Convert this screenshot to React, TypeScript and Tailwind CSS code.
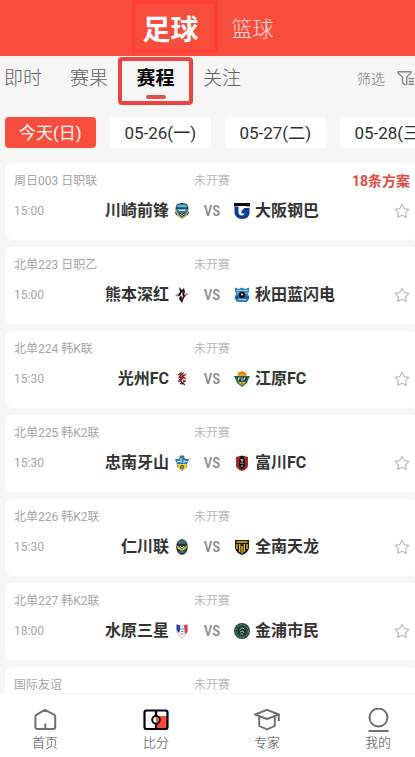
import type { ReactNode } from 'react';
import clsx from 'clsx';

interface Match {
  id: string;
  league: string;
  time: string;
  home: string;
  away: string;
  homeCrest: ReactNode;
  awayCrest: ReactNode;
  plans?: string;
}

const sports = ['足球', '篮球'];
const tabs = ['即时', '赛果', '赛程', '关注'];
const dates = ['今天(日)', '05-26(一)', '05-27(二)', '05-28(三)'];

function Crest({ children }: { children: ReactNode }) {
  return (
    <svg viewBox="0 0 16 16" className="h-4 w-4 shrink-0" aria-hidden="true">
      {children}
    </svg>
  );
}

const crests = {
  kawasaki: (
    <Crest>
      <path d="M1 5 L3 1 H13 L15 5 L14 12 L8 16 L2 12Z" fill="#b79a6c" />
      <path d="M3 1 L8 0 L13 1 L14 6 H2Z" fill="#17171d" />
      <path d="M3.5 1.5 H12.5 L13 4.5 H3Z" fill="#45b9ea" />
      <path d="M2 5.5 H14 L12.5 10 H3.5Z" fill="#2a7fa8" />
      <path d="M4 6.5 H12 L11 8 H5Z" fill="#c9e6f0" />
      <path d="M4.5 9 L8 11 L11.5 9 L11 12 L8 14 L5 12Z" fill="#2c2d38" />
      <path d="M5.5 11 L8 12.5 L10.5 11" stroke="#e3cc9c" fill="none" />
      <path d="M1 9 L3 12 M15 9 L13 12" stroke="#52402f" />
    </Crest>
  ),
  osaka: (
    <Crest>
      <path d="M0 0 H16 V3.5 H12.5 V3 H3.5 V3.5 H0Z" fill="#08090f" />
      <path d="M0.5 4 H4.5 V10 Q5 12.5 8 12.5 Q10.2 12.3 10.8 10.5 H7.5 V8 L10.5 5 H15.5 V11 Q14 16 8 16 Q1.5 15.5 0.5 10Z" fill="#0b3b92" />
    </Crest>
  ),
  kumamoto: (
    <Crest>
      <path d="M5 0 L8 3 L10 1 L11 5 L10 8 L13 7 L10 11 L8 16 L5 12 L6 9 L3 9 L6 5Z" fill="#171216" />
      <path d="M1 8 L5 6 L4 10Z M12 6 L15 7 L11 9Z" fill="#a38b8d" />
      <path d="M7 6 L10 4 L8 8Z M7 11 L10 9 L8 13Z" fill="#d7303f" />
      <path d="M8 5.5 L6 9 L9 10Z" fill="#fff" />
    </Crest>
  ),
  akita: (
    <Crest>
      <path d="M1 0.5 L5 2 L8 0.5 L11 2 L15 0.5 V4 L14 7 L15.5 11 L13 15 H3 L0.5 11 L2 7 L1 4Z" fill="#2f7fb8" />
      <path d="M2 3.5 H14 M2 6 H14 M3 12.5 H13" stroke="#9ed0ea" />
      <circle cx="8" cy="8" r="3.3" fill="#10151f" />
      <circle cx="8" cy="7.5" r="1" fill="#e8f2f7" />
      <path d="M1 10 L4 10 L3 13 M15 10 L12 10 L13 13" stroke="#14406e" fill="none" />
    </Crest>
  ),
  gwangju: (
    <Crest>
      <path d="M4 4 L7 2 L6 5 L9 2.5 L8.5 6 L12 3 M4 7 L7 6 L6.5 9 L10 6.5 L12 8 M4 10 L7 10 L8 12 L11 10 M6 13 L8 11.5 L11 14" stroke="#8d1d2c" strokeWidth="1.3" fill="none" />
      <path d="M5 8.5 L8 8 M9 9 L12 10.5 M8 13.5 L10 12" stroke="#3a1c20" />
    </Crest>
  ),
  gangwon: (
    <Crest>
      <path d="M8 0 L12 1.5 L13 5 H3 L4 1.5Z" fill="#f1a024" />
      <path d="M5 3 L8 1.5 L11 3" stroke="#c95a1f" fill="none" />
      <path d="M0 5 H16 L14 9 L13 12 L8 16 L3 12 L2 9Z" fill="#1d6a48" />
      <path d="M3 6 H13 L12 10 H4Z" fill="#24303b" />
      <path d="M4.5 9.5 V7 H6.5 M8 6.5 V10 M10 9.5 V7 H11.5" stroke="#eef3e4" fill="none" />
      <path d="M4 11 H12 L8 15Z" fill="#e2b32b" />
      <path d="M8 11 V15" stroke="#2b8254" />
    </Crest>
  ),
  chungnam: (
    <Crest>
      <path d="M6 0.5 H10 L11 4 H15 L13 9 V12 L8 16 L3 12 V9 L1 4 H5Z" fill="#2b75b3" />
      <path d="M3 9 H13 L12 13 L8 16 L4 13Z" fill="#f0ce32" />
      <path d="M3 6.5 H6 M7 3 V8 M10 5 V8 M11 6.5 H13" stroke="#fff" />
      <circle cx="8" cy="12" r="2" fill="#32566a" />
      <path d="M7 12 H9" stroke="#f0ce32" />
    </Crest>
  ),
  bucheon: (
    <Crest>
      <path d="M2 2 L8 0.5 L14 2 V11 Q13 14.5 8 16 Q3 14.5 2 11Z" fill="#a3262b" />
      <path d="M6 1 H10 V4 H11 V12 L8 14.5 L5 12 V4 H6Z" fill="#15100f" />
      <path d="M6.5 5 L9.5 5 M8 4 V7 M6.5 9 L8 7.5 L9.5 9 M7 11 H9" stroke="#efd7ca" strokeWidth="0.9" fill="none" />
    </Crest>
  ),
  incheon: (
    <Crest>
      <ellipse cx="8" cy="8" rx="5.8" ry="7.8" fill="#22303a" />
      <path d="M4 4 H12 M5 2.2 H11" stroke="#68a8a8" strokeWidth="0.9" />
      <path d="M2.5 6.5 L6 8 L8 10 L10 8 L13.5 6.5 L12 10 L8 12 L4 10Z" fill="#b9c33c" />
      <path d="M6 7 L8 9 L10 7" stroke="#eff3df" fill="none" />
      <path d="M5 13 H11" stroke="#6ca59e" />
    </Crest>
  ),
  jeonnam: (
    <Crest>
      <path d="M1 1 H15 V9 Q14 14 8 16 Q2 14 1 9Z" fill="#191511" />
      <path d="M3 5 V10 M5.7 5 V13 M8 7 V14.5 M10.3 5 V13 M13 5 V10" stroke="#e8bd22" strokeWidth="1.4" />
      <path d="M2.5 3 H13.5" stroke="#e8bd22" strokeWidth="1.5" />
    </Crest>
  ),
  suwon: (
    <Crest>
      <path d="M3 1.5 L8 3 L13 1.5 V10 L8 15.5 L3 10Z" fill="#eef1f7" stroke="#a9b7d4" strokeWidth="0.7" />
      <path d="M2.5 1.5 L6 2.5 V7 L5 10 L2.5 7Z" fill="#21489a" />
      <path d="M10 2.5 L13.5 1.5 V9 L11 11Z" fill="#df3745" />
      <path d="M6 6 H10 M7 8.5 H9.5 M7 11 L9 11" stroke="#7b93bd" />
    </Crest>
  ),
  gimpo: (
    <Crest>
      <circle cx="8" cy="8" r="8" fill="#1d4a3c" />
      <circle cx="8" cy="8" r="6.3" fill="none" stroke="#8aa06a" strokeWidth="0.9" strokeDasharray="2 1.4" />
      <circle cx="8" cy="8" r="4.4" fill="#17343c" />
      <path d="M5.5 7 L8 4.8 L10.5 6 M6 9 L9 8 L10 10 M6.5 11 H9" stroke="#b8c3a1" fill="none" />
    </Crest>
  ),
};

const matches: Match[] = [
  { id: '003', league: '周日003 日职联', time: '15:00', home: '川崎前锋', away: '大阪钢巴', homeCrest: crests.kawasaki, awayCrest: crests.osaka, plans: '18条方案' },
  { id: '223', league: '北单223 日职乙', time: '15:00', home: '熊本深红', away: '秋田蓝闪电', homeCrest: crests.kumamoto, awayCrest: crests.akita },
  { id: '224', league: '北单224 韩K联', time: '15:30', home: '光州FC', away: '江原FC', homeCrest: crests.gwangju, awayCrest: crests.gangwon },
  { id: '225', league: '北单225 韩K2联', time: '15:30', home: '忠南牙山', away: '富川FC', homeCrest: crests.chungnam, awayCrest: crests.bucheon },
  { id: '226', league: '北单226 韩K2联', time: '15:30', home: '仁川联', away: '全南天龙', homeCrest: crests.incheon, awayCrest: crests.jeonnam },
  { id: '227', league: '北单227 韩K2联', time: '18:00', home: '水原三星', away: '金浦市民', homeCrest: crests.suwon, awayCrest: crests.gimpo },
];

function MetaRow({ league, plans }: { league: string; plans?: string }) {
  return (
    <div className="grid h-4 grid-cols-[1fr_auto_1fr] items-center text-xs leading-4">
      <span className="text-[#a6a6a6]">{league}</span>
      <span className="text-[#b8b8b8]">未开赛</span>
      {plans && <span className="text-right text-sm leading-4 font-bold text-[#e5493c]">{plans}</span>}
    </div>
  );
}

function MatchCard({ match }: { match: Match }) {
  return (
    <li className="rounded-lg bg-white px-[9px] pt-2.5 pb-[17px]">
      <MetaRow league={match.league} plans={match.plans} />
      <div className="mt-2.5 grid h-6 grid-cols-[1fr_44px_1fr] items-center">
        <div className="flex items-center gap-[5px]">
          <time className="mr-auto text-xs text-[#a6a6a6]">{match.time}</time>
          <span className="text-base leading-6 font-bold text-[#333]">{match.home}</span>
          {match.homeCrest}
        </div>
        <span className="text-center font-['Roboto_Condensed','Liberation_Sans_Narrow',Roboto,sans-serif] text-[15px] leading-6 font-medium text-[#8c8c8c]">
          VS
        </span>
        <div className="flex items-center gap-[5px]">
          {match.awayCrest}
          <span className="text-base leading-6 font-bold text-[#333]">{match.away}</span>
          <button type="button" aria-label="收藏" className="ml-auto">
            <svg viewBox="0 0 16 16" className="h-4 w-4" fill="none" stroke="#bdbdbd" strokeWidth="1.2" strokeLinejoin="round">
              <path d="M8 1.3 L10.1 5.6 L14.9 6.3 L11.5 9.7 L12.3 14.4 L8 12.2 L3.7 14.4 L4.5 9.7 L1.1 6.3 L5.9 5.6Z" />
            </svg>
          </button>
        </div>
      </div>
    </li>
  );
}

const navItems = [
  {
    label: '首页',
    icon: (
      <path d="M13 1.8 L22 6.6 Q23.2 7.4 23.2 8.8 V19 Q23.2 21 21.2 21 H5.4 Q3.4 21 3.4 19 V8.8 Q3.4 7.4 4.6 6.6Z M13.3 15.5 V21" fill="none" stroke="#6f6f6f" strokeWidth="2" strokeLinejoin="round" />
    ),
  },
  {
    label: '比分',
    icon: (
      <>
        <rect x="1.5" y="2.5" width="23" height="18.5" rx="2" fill="#fff" />
        <path d="M13 8 H24 V20 H13Z" fill="#f54c3d" />
        <path d="M13 2.5 V8 M13 15.5 V21" stroke="#000" strokeWidth="2.2" />
        <rect x="1.5" y="2.5" width="23" height="18.5" rx="2" fill="none" stroke="#000" strokeWidth="2.2" />
        <circle cx="13" cy="11.8" r="3.8" fill="#fff" stroke="#000" strokeWidth="2" />
        <path d="M13 9 A2.8 2.8 0 0 1 13 14.6Z" fill="#f54c3d" />
      </>
    ),
  },
  {
    label: '专家',
    icon: (
      <g fill="none" stroke="#6f6f6f" strokeWidth="1.9" strokeLinejoin="round">
        <path d="M1 6.5 L13 1.8 L25 6.5 L13 11Z" />
        <path d="M5.2 8.5 V18 L13 21.3 L20.8 18 V8.5 M24.8 6.5 V13" />
      </g>
    ),
  },
  {
    label: '我的',
    icon: (
      <g fill="none" stroke="#6f6f6f" strokeWidth="2">
        <circle cx="13.5" cy="9.5" r="9" />
        <path d="M3.5 23 H23.5" />
      </g>
    ),
  },
];

export default function App() {
  return (
    <div className="flex h-screen flex-col overflow-hidden bg-[#f6f6f6] font-[Roboto,'Noto_Sans_CJK_SC',sans-serif]">
      <header className="flex h-14 shrink-0 items-start justify-center bg-[#f74d3d] pl-1">
        {sports.map((sport, i) => (
          <button
            key={sport}
            type="button"
            className={clsx(
              i === 0
                ? 'h-[53px] w-[86px] border-4 border-[#fc3f39] pt-2 pr-2 text-[28px] leading-9 font-bold text-white'
                : 'h-14 w-[70px] pt-0.5 text-[21px] leading-8 font-light text-white/80',
            )}
          >
            {sport}
          </button>
        ))}
      </header>

      {/* Sub tabs */}
      <div className="flex h-[49px] shrink-0 items-center pr-px">
        <nav className="-ml-2.5 flex">
          {tabs.map((tab) => (
            <button
              key={tab}
              type="button"
              className={clsx(
                'relative h-12 shrink-0 text-[19px] leading-7',
                tab === '赛程'
                  ? '-mx-1 w-[75px] rounded border-4 border-[#ec4343] pb-1 font-bold text-black'
                  : 'w-[66px] pb-1 font-light text-[#5f5f5f]',
              )}
            >
              {tab}
              {tab === '赛程' && (
                <span className="absolute bottom-0.5 left-1/2 h-1 w-5 -translate-x-1/2 rounded-full bg-[#df5145]" />
              )}
            </button>
          ))}
        </nav>
        <button type="button" className="ml-auto flex items-center gap-3 pb-1 text-sm font-light text-[#777]">
          筛选
          <svg viewBox="0 0 17 16" className="h-4 w-[17px]" fill="none" stroke="#858585" strokeWidth="1.4" strokeLinejoin="round">
            <path d="M8.5 14 L5.5 12 V6 L1 2 V0.8 H14 V2 L9.7 6 V14" />
            <path d="M11.5 7.5 H17 M11.5 10.5 H17 M11.5 13.3 H17" />
          </svg>
        </button>
      </div>

      {/* Date picker */}
      <div className="flex shrink-0 gap-3.5 overflow-hidden pt-3 pb-[15px] pl-[5px]">
        {dates.map((date, i) => (
          <button
            key={date}
            type="button"
            className={clsx(
              'h-[31px] shrink-0 rounded text-[17px] leading-6 font-normal',
              i === 0 ? 'bg-[#f74d3d] px-3.5 text-white' : 'w-[101px] bg-white text-[#2f2f2f]',
            )}
          >
            {date}
          </button>
        ))}
      </div>

      <main className="min-h-0 flex-1 overflow-x-hidden overflow-y-auto [scrollbar-width:none]">
        <ul className="-mr-1 ml-[5px] flex flex-col gap-[7px]">
          {matches.map((match) => (
            <MatchCard key={match.id} match={match} />
          ))}
          <li className="rounded-t-lg bg-white px-[9px] pt-2.5">
            <MetaRow league="国际友谊" />
          </li>
        </ul>
      </main>

      <nav className="flex h-[63px] shrink-0 justify-between bg-white pt-3.5 pr-6 pl-8">
        {navItems.map(({ label, icon }) => (
          <a key={label} href="#" className="flex flex-col items-center text-[13px] leading-5 font-light text-[#444]">
            <svg viewBox="0 0 26 25" className="h-[25px] w-[26px]" aria-hidden="true">
              {icon}
            </svg>
            {label}
          </a>
        ))}
      </nav>
    </div>
  );
}
